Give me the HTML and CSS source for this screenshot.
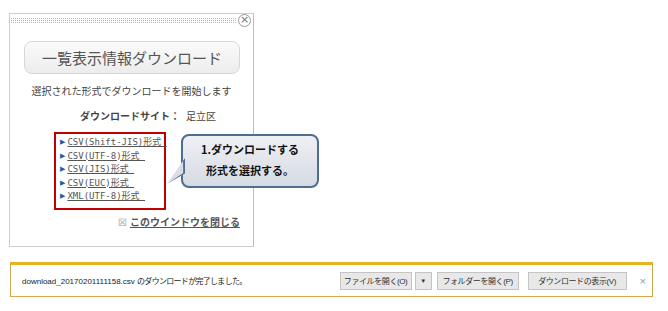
FILE: index.html
```html
<!DOCTYPE html>
<html lang="ja">
<head>
  <meta charset="UTF-8" />
  <title>一覧表示情報ダウンロード</title>
  <link rel="stylesheet" href="styles.css">
</head>
<body>
  <div class="dialog">
    <div class="dialog-head">
      <div class="grip"></div>
      <span class="close-btn">&times;</span>
    </div>

    <div class="title-btn">一覧表示情報ダウンロード</div>

    <p class="lead">選択された形式でダウンロードを開始します</p>
    <p class="site"><b>ダウンロードサイト：</b>足立区</p>

    <ul class="formats">
      <li><a href="#">CSV(Shift-JIS)形式&nbsp;</a></li>
      <li><a href="#">CSV(UTF-8)形式&nbsp;</a></li>
      <li><a href="#">CSV(JIS)形式&nbsp;</a></li>
      <li><a href="#">CSV(EUC)形式&nbsp;</a></li>
      <li><a href="#">XML(UTF-8)形式&nbsp;</a></li>
    </ul>

    <p class="close-link"><span class="box-x">&#x2612;</span><a href="#">このウインドウを閉じる</a></p>

    <!-- 説明用の吹き出し -->
    <div class="callout">
      <span class="tail"></span>
      1.ダウンロードする<br>形式を選択する。
    </div>
  </div>

  <div class="dlbar">
    <span class="dl-msg">download_20170201111158.csv <span class="ja">のダウンロードが完了しました。</span></span>
    <div class="dl-actions">
      <button class="b-open">ファイルを開く(O)</button>
      <button class="b-drop">&#9660;</button>
      <button class="b-folder">フォルダーを開く(P)</button>
      <button class="b-show">ダウンロードの表示(V)</button>
      <span class="dl-close">&times;</span>
    </div>
  </div>
</body>
</html>
```

FILE: styles.css
```css
body {
  margin: 0;
  background: #fff;
  font-family: "Noto Sans CJK JP", sans-serif;
  color: #333;
}

.dialog {
  position: relative;
  width: 243px;
  height: 232px;
  margin: 13px 0 0 9px;
  border: 1px solid #cfcfcf;
  border-right-color: #bdbdbd;
}

.dialog-head {
  display: flex;
  align-items: center;
  gap: 2px;
  padding: 1px 2px 0 0;
  height: 10px;
}

.grip {
  flex: 1;
  height: 7px;
  background-image: linear-gradient(90deg, #fff 1px, transparent 1px), linear-gradient(#fff 1px, #b4b4b4 1px);
  background-size: 2px 2px;
}

.close-btn {
  width: 11px;
  height: 11px;
  border: 1px solid #9a9a9a;
  border-radius: 50%;
  font: 11px/10px "DejaVu Sans", sans-serif;
  text-align: center;
  color: #777;
}

.title-btn {
  margin: 16px 13px 0 14px;
  height: 31px;
  border: 1px solid #d6d6d6;
  border-radius: 8px;
  background: linear-gradient(#fbfbfb, #ececec);
  text-align: center;
  font-size: 15px;
  line-height: 31px;
  color: #555;
}

.lead {
  margin: 9px 0 0;
  text-align: center;
  font-size: 10px;
  color: #444;
}

.site {
  margin: 10px 0 0 70px;
  font-size: 10px;
  color: #444;
}

.site b {
  margin-right: 6px;
}

.formats {
  list-style: none;
  margin: 9px 0 0 44px;
  padding: 2px 0 4px 4px;
  width: 104px;
  border: 2px solid #c00000;
}

.formats li {
  font: 9px/13.5px "DejaVu Sans Mono", "Noto Sans CJK JP", monospace;
  white-space: nowrap;
}

.formats li::before {
  content: "\25B6";
  font: 7px "DejaVu Sans", sans-serif;
  color: #1f5fa8;
  margin-right: 2px;
  vertical-align: 1px;
}

.formats a {
  color: #555;
  text-decoration: underline;
}

.close-link {
  margin: 4px 13px 0 0;
  text-align: right;
  font-size: 10px;
  font-weight: bold;
}

.close-link a {
  color: #555;
  text-decoration: underline;
}

.box-x {
  color: #999;
  font-weight: normal;
  margin-right: 3px;
}

.callout {
  position: absolute;
  left: 171px;
  top: 120px;
  width: 134px;
  height: 47px;
  padding-top: 3px;
  border: 2px solid #4f6d8e;
  border-radius: 8px;
  background: linear-gradient(#eef0f4, #d6dae2);
  text-align: center;
  font-size: 11px;
  font-weight: bold;
  line-height: 21px;
  color: #111;
}

.callout .tail {
  position: absolute;
  left: -16px;
  top: 22px;
  width: 18px;
  height: 26px;
  background: #d9dde5;
  clip-path: polygon(100% 0, 100% 60%, 0 100%);
}

.callout .tail::before {
  content: "";
  position: absolute;
  inset: 0;
  background: #4f6d8e;
  clip-path: polygon(100% 0, 89% 7%, 90% 58%, 0 100%, 100% 62%, 100% 0);
}

.dlbar {
  display: flex;
  align-items: center;
  justify-content: space-between;
  width: 641px;
  height: 31px;
  margin: 15px 0 0 10px;
  border: 1px solid #c9a64c;
  border-top: 3px solid #e7b323;
  border-bottom-color: #d7a84a;
  font-family: "Liberation Sans", "Noto Sans CJK JP", sans-serif;
}

.dl-msg {
  margin-left: 11px;
  font-size: 8px;
  color: #222;
  white-space: nowrap;
}

.dl-msg .ja {
  letter-spacing: -0.7px;
}

.dl-actions {
  display: flex;
  align-items: center;
  gap: 5px;
  margin-right: 6px;
}

.dl-actions button {
  height: 18px;
  padding: 0;
  border: 1px solid #c4c4c4;
  background: #e8e8e8;
  font: 8px "Liberation Sans", "Noto Sans CJK JP", sans-serif;
  letter-spacing: -0.4px;
  white-space: nowrap;
  color: #333;
}

.b-open { width: 72px; }
.b-drop { width: 17px; font-size: 6px !important; margin-left: -2px; }
.b-folder { width: 82px; }
.b-show { width: 99px; margin-left: 4px; }

.dl-close {
  margin-left: 8px;
  font-size: 11px;
  color: #999;
}
```
